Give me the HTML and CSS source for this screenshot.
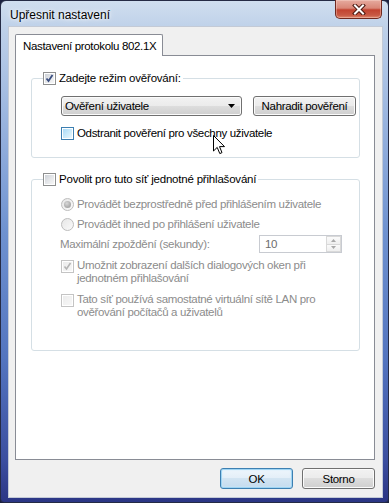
FILE: index.html
```html
<!DOCTYPE html>
<html lang="cs">
<head>
<meta charset="utf-8">
<title>Upřesnit nastavení</title>
<link rel="stylesheet" href="styles.css">
</head>
<body>
<div class="window">
  <div class="titlebar">
    <span class="title">Upřesnit nastavení</span>
    <div class="close">
      <svg width="14" height="11" viewBox="0 0 14 11"><path d="M3 1.5 L11 9.5 M11 1.5 L3 9.5" stroke="#4b1810" stroke-width="4" stroke-linecap="square" fill="none"/><path d="M3 1.5 L11 9.5 M11 1.5 L3 9.5" stroke="#ffffff" stroke-width="2" stroke-linecap="square" fill="none"/></svg>
    </div>
  </div>
  <div class="client">
    <div class="tab">Nastavení protokolu 802.1X</div>
    <div class="panel">
      <div class="group g1">
        <div class="legend">
          <span class="cb"><svg class="check" width="13" height="13" viewBox="0 0 13 13"><path d="M3.5 6.5 L5.5 9 L9.5 3" stroke="#3b4f80" stroke-width="1.8" fill="none"/></svg></span>
          <span class="lg">Zadejte režim ověřování:</span>
        </div>
        <div class="combo-row">
          <div class="combo"><span>Ověření uživatele</span><svg width="7" height="4" viewBox="0 0 7 4"><path d="M0 0 H7 L3.5 4 Z" fill="#000"/></svg></div>
          <div class="btn wide">Nahradit pověření</div>
        </div>
        <div class="opt"><span class="cb hot"></span><span>Odstranit pověření pro všechny uživatele</span></div>
      </div>
      <div class="group g2">
        <div class="legend">
          <span class="cb"></span>
          <span class="lg">Povolit pro tuto síť jednotné přihlašování</span>
        </div>
        <div class="opt dis r1"><span class="rb on"></span><span>Provádět bezprostředně před přihlášením uživatele</span></div>
        <div class="opt dis r2"><span class="rb"></span><span>Provádět ihned po přihlášení uživatele</span></div>
        <div class="spin-row dis">
          <span class="spin-label">Maximální zpoždění (sekundy):</span>
          <div class="spin">
            <span class="spin-val">10</span>
            <div class="spin-btns">
              <div class="spin-b"><svg width="5" height="3" viewBox="0 0 5 3"><path d="M0 3 L2.5 0 L5 3 Z" fill="#a9a9a9"/></svg></div>
              <div class="spin-b"><svg width="5" height="3" viewBox="0 0 5 3"><path d="M0 0 L5 0 L2.5 3 Z" fill="#a9a9a9"/></svg></div>
            </div>
          </div>
        </div>
        <div class="multi dis c3"><span class="cb off"><svg class="check" width="13" height="13" viewBox="0 0 13 13"><path d="M3.5 6.5 L5.5 9 L9.5 3" stroke="#b4b4b4" stroke-width="1.6" fill="none"/></svg></span><span>Umožnit zobrazení dalších dialogových oken při<br>jednotném přihlašování</span></div>
        <div class="multi dis c4"><span class="cb off"></span><span>Tato síť používá samostatné virtuální sítě LAN pro<br>ověřování počítačů a uživatelů</span></div>
      </div>
    </div>
    <div class="buttons">
      <div class="btn def">OK</div>
      <div class="btn">Storno</div>
    </div>
  </div>
  <svg class="cursor" width="13" height="20" viewBox="0 0 13 20"><path d="M0.5 0.5 L0.5 16 L4.2 12.4 L6.8 18.6 L9 17.6 L6.5 11.6 L11.5 11.6 Z" fill="#fff" stroke="#000" stroke-width="1" stroke-linejoin="miter"/></svg>
</div>
</body>
</html>
```
FILE: styles.css
```css
html, body {
  margin: 0;
  padding: 0;
}
body {
  width: 389px;
  height: 503px;
  overflow: hidden;
  background: #1b2140;
  font-family: "Liberation Sans", Arial, sans-serif;
  font-size: 11.5px;
  letter-spacing: -0.33px;
  color: #000;
}
.window {
  position: relative;
  box-sizing: border-box;
  width: 389px;
  height: 503px;
  display: flex;
  flex-direction: column;
  padding: 0 6px 5px 8px;
  border: 1px solid #252b45;
  border-radius: 6px 6px 4px 4px;
  background: linear-gradient(180deg, #d0deef 0px, #bfd1e9 26px, #9db7e0 110px, #6f92d0 230px, #5374bf 360px, #3b4e9f 460px, #2a3483 503px);
}
.titlebar {
  height: 26px;
  display: flex;
  justify-content: space-between;
  align-items: flex-start;
  flex: none;
}
.title {
  padding: 7px 0 0 1px;
  font-size: 12px;
  letter-spacing: 0;
  line-height: 15px;
  text-shadow: 0 0 6px #fff, 0 0 3px #fff;
}
.close {
  width: 47px;
  height: 19px;
  margin-top: -1px;
  box-sizing: border-box;
  border: 1px solid #70291f;
  border-top: none;
  border-radius: 0 0 5px 5px;
  background: linear-gradient(180deg, #e6ab9f 0%, #d98677 45%, #c24330 55%, #c85a45 85%, #e08a70 100%);
  box-shadow: inset 0 0 0 1px rgba(255, 230, 220, 0.35);
  display: flex;
  align-items: center;
  justify-content: center;
}
.client {
  flex: 1;
  display: flex;
  flex-direction: column;
  background: #f0f0f0;
  padding: 7px 7px 8px 6px;
  box-shadow: 0 0 0 1px #c3cad6;
}
.tab {
  align-self: flex-start;
  box-sizing: border-box;
  width: 148px;
  height: 22px;
  padding-left: 7px;
  line-height: 22px;
  background: #fff;
  border: 1px solid #898c95;
  border-bottom: none;
  border-radius: 2px 2px 0 0;
  margin-bottom: -1px;
  position: relative;
  z-index: 1;
}
.panel {
  flex: 1;
  background: #fff;
  border: 1px solid #898c95;
  padding: 22px 14px 0 15px;
}
.group {
  position: relative;
  border: 1px solid #d5dfe5;
  border-radius: 3px;
}
.g1 {
  padding: 17px 3px 16px 29px;
}
.g2 {
  margin-top: 21px;
  padding: 16px 3px 31px 29px;
}
.legend {
  position: absolute;
  top: -7px;
  left: 11px;
  height: 13px;
  display: flex;
  align-items: center;
  gap: 3px;
  background: #fff;
  padding-right: 2px;
  line-height: 13px;
}
.lg {
  letter-spacing: -0.2px;
}
.cb {
  position: relative;
  flex: none;
  width: 13px;
  height: 13px;
  box-sizing: border-box;
  border: 1px solid #8e8f8f;
  background: #fff;
}
.cb::before {
  content: "";
  position: absolute;
  left: 1px;
  top: 1px;
  width: 9px;
  height: 9px;
  background: linear-gradient(135deg, #cdd1d7 0%, #e4e6e9 50%, #f7f7f7 100%);
  border: 0;
  box-sizing: border-box;
}
.cb .check {
  position: absolute;
  left: -1px;
  top: -1px;
}
.cb.hot {
  border-color: #3c7fb1;
}
.cb.hot::before {
  background: linear-gradient(135deg, #a9dbf8 0%, #c9eafb 50%, #eaf7fe 100%);
}
.cb.off {
  border-color: #c4c4c4;
}
.cb.off::before {
  background: linear-gradient(135deg, #ececec 0%, #f7f7f7 100%);
}
.combo-row {
  display: flex;
  justify-content: space-between;
  align-items: flex-start;
}
.combo {
  box-sizing: border-box;
  width: 181px;
  height: 20px;
  display: flex;
  align-items: center;
  justify-content: space-between;
  padding: 0 6px 0 3px;
  border: 1px solid #707070;
  border-radius: 3px;
  background: linear-gradient(180deg, #f2f2f2 0%, #ebebeb 50%, #dddddd 50%, #cfcfcf 100%);
  box-shadow: inset 0 0 0 1px #fbfbfb;
}
.btn {
  box-sizing: border-box;
  height: 21px;
  width: 73px;
  display: flex;
  align-items: center;
  justify-content: center;
  border: 1px solid #707070;
  border-radius: 3px;
  background: linear-gradient(180deg, #f2f2f2 0%, #ebebeb 50%, #dddddd 50%, #cfcfcf 100%);
  box-shadow: inset 0 0 0 1px #fbfbfb;
}
.btn.wide {
  width: 103px;
  height: 20px;
}
.btn.def {
  border-color: #3c7fb1;
  background: linear-gradient(180deg, #eef6fc 0%, #e3eef8 50%, #d2e4f2 50%, #c4dbee 100%);
  box-shadow: inset 0 0 0 1px #9fd4f3, inset 0 0 2px 1px #cdeafb;
}
.opt {
  display: flex;
  align-items: center;
  gap: 3px;
  height: 15px;
  margin-top: 10px;
  line-height: 15px;
}
.dis {
  color: #8c8c8c;
}
.r1 {
  height: 17px;
  margin-top: 0;
}
.r2 {
  height: 17px;
  margin-top: 3px;
}
.rb {
  position: relative;
  flex: none;
  width: 13px;
  height: 13px;
  box-sizing: border-box;
  border: 1px solid #bdbdbd;
  border-radius: 50%;
  background: linear-gradient(135deg, #e6e6e6, #fafafa);
}
.rb.on::before {
  content: "";
  position: absolute;
  left: 2px;
  top: 2px;
  width: 7px;
  height: 7px;
  border-radius: 50%;
  background: radial-gradient(circle at 40% 35%, #d8d8d8 0%, #b0b0b0 55%, #9a9a9a 100%);
}
.spin-row {
  display: flex;
  align-items: center;
  justify-content: space-between;
  height: 18px;
  margin-top: 2px;
  margin-left: -1px;
  padding-right: 14px;
}
.spin {
  box-sizing: border-box;
  width: 83px;
  height: 18px;
  display: flex;
  border: 1px solid #c8cbd1;
  background: #fff;
}
.spin-val {
  padding-left: 5px;
  line-height: 16px;
  color: #6d6d6d;
}
.spin-btns {
  margin-left: auto;
  width: 15px;
  display: flex;
  flex-direction: column;
}
.spin-b {
  flex: 1;
  display: flex;
  align-items: center;
  justify-content: center;
  border: 1px solid #d9d9d9;
  background: linear-gradient(180deg, #fbfbfb, #efefef);
}
.spin-b + .spin-b {
  border-top: none;
}
.multi {
  display: flex;
  align-items: flex-start;
  gap: 3px;
  line-height: 13px;
}
.multi .cb {
  margin-top: 1px;
}
.c3 {
  margin-top: 6px;
}
.c4 {
  margin-top: 8px;
}
.buttons {
  display: flex;
  justify-content: flex-end;
  gap: 9px;
  margin-top: 8px;
}
.cursor {
  position: absolute;
  left: 212px;
  top: 134px;
}
```
